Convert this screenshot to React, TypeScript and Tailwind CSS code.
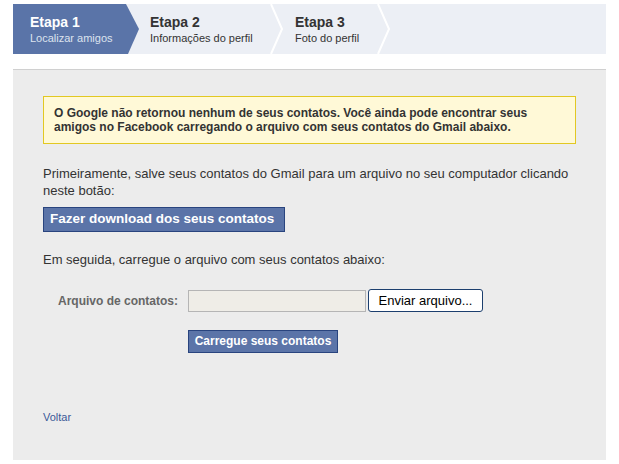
import React from 'react';

const font = { fontFamily: '"Liberation Sans", Arial, sans-serif' };

const Chevron: React.FC = () => (
    <svg width="14" height="50" viewBox="0 0 14 50" className="shrink-0">
        <polyline points="1,0 12,25 1,50" fill="none" stroke="#ffffff" strokeWidth="2" />
    </svg>
);

const App: React.FC = () => {
    return (
        <div className="w-[619px] h-[464px] bg-white pt-[4px] px-[13px] text-[#333]" style={font}>
            {/* steps */}
            <div className="flex h-[50px] bg-[#eceff5]">
                <div className="w-[126px] shrink-0 bg-[#5a74a8] pl-[17px] pt-[10px] [clip-path:polygon(0_0,113px_0,126px_50%,115px_100%,0_100%)]">
                    <div className="text-[14px] font-bold leading-[17px] text-white">Etapa 1</div>
                    <div className="text-[11px] leading-[15px] text-[#dde3ee]">Localizar amigos</div>
                </div>
                <div className="w-[131px] shrink-0 pl-[11px] pt-[10px]">
                    <div className="text-[14px] font-bold leading-[17px] text-[#333]">Etapa 2</div>
                    <div className="text-[11px] leading-[15px] text-[#333]">Informações do perfil</div>
                </div>
                <Chevron />
                <div className="w-[93px] shrink-0 pl-[11px] pt-[10px]">
                    <div className="text-[14px] font-bold leading-[17px] text-[#333]">Etapa 3</div>
                    <div className="text-[11px] leading-[15px] text-[#333]">Foto do perfil</div>
                </div>
                <Chevron />
                <div className="flex-1" />
            </div>

            {/* panel */}
            <div className="mt-[15px] h-[391px] border-t border-[#d0d0d0] bg-[#ececec] px-[30px] pt-[26px]">
                <div className="border border-[#e2c822] bg-[#fff9d7] px-[10px] py-[9px] text-[12px] font-bold leading-[14px] text-[#333]">
                    O Google não retornou nenhum de seus contatos. Você ainda pode encontrar seus amigos no Facebook carregando o arquivo com seus contatos do Gmail abaixo.
                </div>

                <p className="mt-[21px] text-[13px] leading-[17px] text-[#333]">
                    Primeiramente, salve seus contatos do Gmail para um arquivo no seu computador clicando neste botão:
                </p>
                <button className="mt-[8px] h-[25px] w-[242px] border border-[#29447e] bg-[#5b74a8] text-left pl-[6px] text-[13.5px] font-bold text-white">
                    Fazer download dos seus contatos
                </button>

                <p className="mt-[19px] text-[13px] leading-[17px] text-[#333]">
                    Em seguida, carregue o arquivo com seus contatos abaixo:
                </p>

                <div className="mt-[21px] flex items-center">
                    <label className="w-[145px] shrink-0 pr-[10px] text-right text-[12px] font-bold text-[#666]">
                        Arquivo de contatos:
                    </label>
                    <div className="h-[22px] w-[178px] border border-[#b5b5b5] bg-[#efede7]" />
                    <button className="ml-[2px] h-[23px] w-[115px] rounded-[3px] border border-[#1c3f6e] bg-white text-[13px] text-black">
                        Enviar arquivo...
                    </button>
                </div>

                <div className="mt-[16px] pl-[145px]">
                    <button className="h-[23px] w-[150px] border border-[#29447e] bg-[#5b74a8] text-[12px] font-bold text-white">
                        Carregue seus contatos
                    </button>
                </div>

                <a href="#" className="mt-[56px] block text-[11px] text-[#3b5998]">Voltar</a>
            </div>
        </div>
    );
};

export default App;
